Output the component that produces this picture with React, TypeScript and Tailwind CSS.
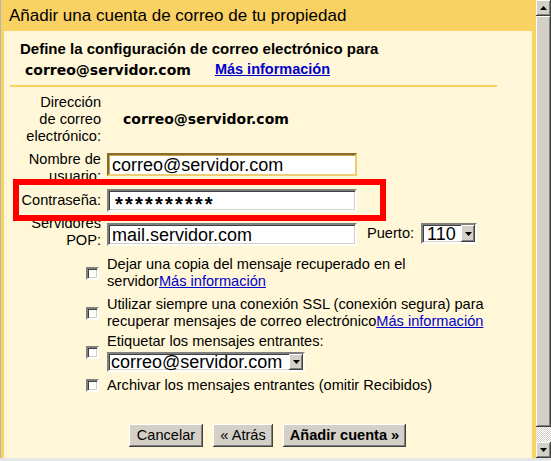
import React from "react";

const sunken =
  "border-2 border-t-[#808080] border-l-[#808080] border-b-white border-r-white shadow-[inset_1px_1px_#404040,inset_-1px_-1px_#d4d0c8]";
const raised =
  "bg-[#d4d0c8] shadow-[inset_-1px_-1px_#404040,inset_1px_1px_#ffffff,inset_-2px_-2px_#808080]";
const mono = "font-['DejaVu_Sans',Verdana,sans-serif]";

function Arrow({ up }: { up?: boolean }) {
  return (
    <svg width="7" height="4" viewBox="0 0 7 4">
      <path d={up ? "M3.5 0 L7 4 L0 4 Z" : "M0 0 L7 0 L3.5 4 Z"} fill="#000" />
    </svg>
  );
}

function Check() {
  return <div className={`w-[13px] h-[13px] shrink-0 bg-white ${sunken}`} />;
}

function Select({ value, w, h, pad }: { value: string; w: string; h: string; pad: string }) {
  return (
    <div className={`${w} ${h} flex items-center bg-white ${sunken}`}>
      <span className={`flex-1 ${pad} text-[18px] leading-none`}>{value}</span>
      <div className={`w-[14px] h-full flex items-center justify-center ${raised}`}>
        <Arrow />
      </div>
    </div>
  );
}

export default function App() {
  return (
    <div className="relative w-[551px] h-[461px] overflow-hidden bg-[#e6e6e6] text-black font-['Liberation_Sans',Arial,sans-serif]">
      <div className="flex h-[458px]">
        <div className="w-px bg-[#b4b4b4]" />
        <div className="flex-1 flex flex-col bg-[#fad163]">
          <div className="h-[31px] flex items-center pl-[8px] text-[17px]">
            Añadir una cuenta de correo de tu propiedad
          </div>
          <div className="flex-1 ml-[3px] mr-[4px] bg-[#fff7d7]">
            {/* header */}
            <div className="pt-[9px] pl-[16px]">
              <div className="text-[15px] font-bold leading-[18px]">
                Define la configuración de correo electrónico para
              </div>
              <div className="mt-[3px] h-[18px] flex items-center">
                <span className={`pl-[5px] text-[14px] font-bold ${mono}`}>correo@servidor.com</span>
                <a className="ml-[24px] text-[14.5px] font-bold text-[#0000cc] underline">
                  Más información
                </a>
              </div>
            </div>
            <div className="mt-[6px] ml-[6px] w-[487px] h-[2px] bg-[#fad163]" />

            {/* form */}
            <div className="text-[14.6px] leading-[17px]">
              <div className="mt-[7px] flex items-center">
                <div className="w-[97px] text-right">
                  Dirección
                  <br />
                  de correo
                  <br />
                  electrónico:
                </div>
                <span className={`ml-[22px] text-[14px] font-bold ${mono}`}>correo@servidor.com</span>
              </div>

              <div className="mt-[6px] h-[34px] flex items-start">
                <div className="w-[97px] text-right">
                  Nombre de
                  <br />
                  usuario:
                </div>
                <div className="ml-[6px] mt-[2px] w-[250px] h-[23px] flex items-center bg-white border-2 border-t-[#8b6b2a] border-l-[#8b6b2a] border-b-[#f0cc70] border-r-[#f0cc70] shadow-[inset_1px_1px_#c8a050]">
                  <span className="pl-[3px] text-[18px] leading-none">correo@servidor.com</span>
                </div>
              </div>

              <div className="mt-[4px] h-[23px] flex items-center">
                <div className="w-[97px] text-right">Contraseña:</div>
                <div className={`ml-[6px] w-[250px] h-[23px] flex items-center bg-white ${sunken}`}>
                  <span className="pl-[6px] pt-[6px] text-[20px] font-bold leading-none tracking-[2.2px]">**********</span>
                </div>
              </div>

              <div className="mt-[3px] h-[34px] flex items-start">
                <div className="w-[97px] text-right">
                  Servidores
                  <br />
                  POP:
                </div>
                <div className={`ml-[6px] mt-[8px] w-[250px] h-[23px] flex items-center bg-white ${sunken}`}>
                  <span className="pl-[3px] text-[18px] leading-none">mail.servidor.com</span>
                </div>
                <div className="ml-[10px] mt-[10px]">Puerto:</div>
                <div className="ml-[7px] mt-[8px]">
                  <Select value="110" w="w-[56px]" h="h-[21px]" pad="pl-[4px]" />
                </div>
              </div>

              {/* options */}
              <div className="mt-[7px] flex items-center">
                <div className="ml-[82px]">
                  <Check />
                </div>
                <div className="ml-[8px] whitespace-nowrap">
                  Dejar una copia del mensaje recuperado en el
                  <br />
                  servidor<a className="text-[#0000cc] underline">Más información</a>
                </div>
              </div>

              <div className="mt-[6px] flex items-center">
                <div className="ml-[82px]">
                  <Check />
                </div>
                <div className="ml-[8px] whitespace-nowrap">
                  Utilizar siempre una conexión SSL (conexión segura) para
                  <br />
                  recuperar mensajes de correo electrónico
                  <a className="text-[#0000cc] underline">Más información</a>
                </div>
              </div>

              <div className="mt-[3px] flex items-center">
                <div className="ml-[82px]">
                  <Check />
                </div>
                <div className="ml-[8px] whitespace-nowrap">
                  <div>Etiquetar los mensajes entrantes:</div>
                  <div className="mt-[2px]">
                    <Select value="correo@servidor.com" w="w-[198px]" h="h-[20px]" pad="pl-[2px]" />
                  </div>
                </div>
              </div>

              <div className="mt-[5px] flex items-center">
                <div className="ml-[82px]">
                  <Check />
                </div>
                <div className="ml-[8px] whitespace-nowrap">
                  Archivar los mensajes entrantes (omitir Recibidos)
                </div>
              </div>

              <div className="mt-[30px] pl-[125px] flex gap-[10px]">
                <button className={`w-[74px] h-[23px] ${raised}`}>Cancelar</button>
                <button className={`w-[60px] h-[23px] ${raised}`}>« Atrás</button>
                <button className={`w-[123px] h-[23px] font-bold ${raised}`}>Añadir cuenta »</button>
              </div>
            </div>
          </div>
        </div>

        {/* scrollbar */}
        <div className="w-[15px] flex flex-col bg-[#d4d0c8]">
          <div className={`h-[16px] flex items-center justify-center ${raised}`}>
            <Arrow up />
          </div>
          <div className={`h-[411px] ${raised}`} />
          <div className="flex-1 bg-[image:repeating-conic-gradient(#ffffff_0%_25%,#d4d0c8_0%_50%)] bg-[length:2px_2px]" />
          <div className={`h-[16px] flex items-center justify-center ${raised}`}>
            <Arrow />
          </div>
        </div>
      </div>

      {/* annotation box over the password row */}
      <div className="absolute left-[13px] top-[179px] w-[373px] h-[42px] border-[6px] border-[#ff0000]" />
    </div>
  );
}
